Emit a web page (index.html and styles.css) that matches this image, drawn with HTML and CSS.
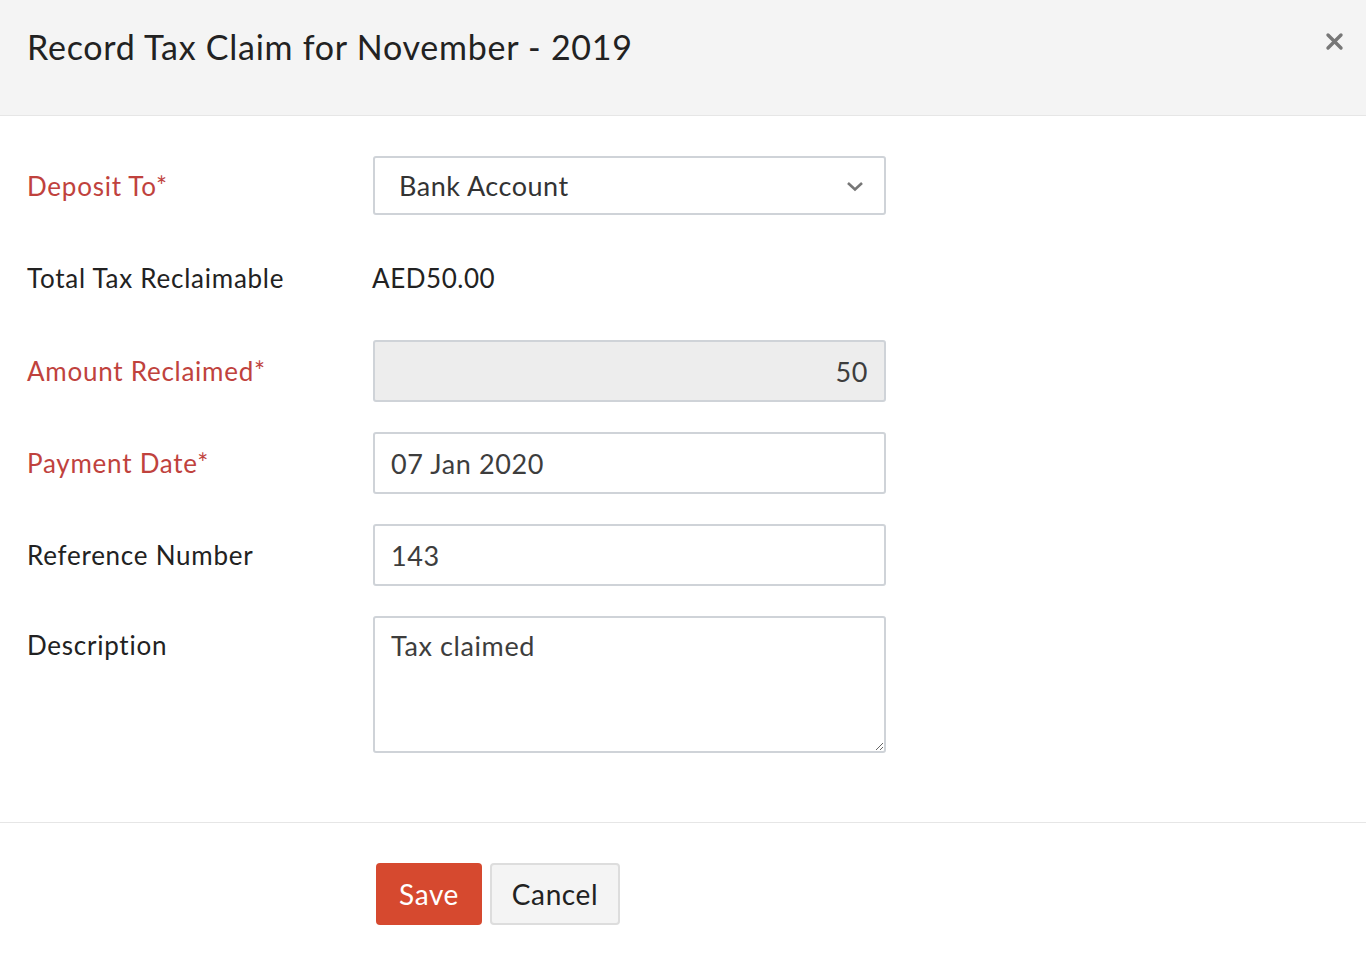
FILE: index.html
```html
<!DOCTYPE html>
<html>
<head>
<meta charset="utf-8">
<title>Record Tax Claim</title>
<link rel="stylesheet" href="styles.css">
</head>
<body>
<div class="modal">
  <div class="modal-header">
    <h1 class="title">Record Tax Claim for November - 2019</h1>
    <button class="close" aria-label="Close">
      <svg width="19" height="19" viewBox="0 0 19 19"><path d="M3 3 L16 16 M16 3 L3 16" stroke="#777" stroke-width="3.4" stroke-linecap="round"/></svg>
    </button>
  </div>
  <div class="modal-body">
    <div class="row">
      <label class="label required">Deposit To*</label>
      <div class="select">
        <span>Bank Account</span>
        <svg class="chev" width="18" height="12" viewBox="0 0 18 12"><path d="M2 3 L9 9.5 L16 3" fill="none" stroke="#777" stroke-width="2.6"/></svg>
      </div>
    </div>
    <div class="row row-static">
      <label class="label">Total Tax Reclaimable</label>
      <div class="static">AED50.00</div>
    </div>
    <div class="row">
      <label class="label required">Amount Reclaimed*</label>
      <input class="input readonly" type="text" value="50" readonly>
    </div>
    <div class="row">
      <label class="label required">Payment Date*</label>
      <input class="input" type="text" value="07 Jan 2020">
    </div>
    <div class="row">
      <label class="label">Reference Number</label>
      <input class="input" type="text" value="143">
    </div>
    <div class="row row-top">
      <label class="label">Description</label>
      <textarea class="input textarea">Tax claimed</textarea>
    </div>
  </div>
  <div class="modal-footer">
    <button class="btn btn-primary">Save</button>
    <button class="btn btn-default">Cancel</button>
  </div>
</div>
</body>
</html>
```
FILE: styles.css
```css
* { box-sizing: border-box; }
html, body { margin: 0; padding: 0; background: #fff; }
body {
  font-family: "Lato", "Liberation Sans", sans-serif;
  color: #222;
}
.modal { width: 1366px; }
.modal-header {
  height: 116px;
  background: #f4f4f4;
  border-bottom: 1px solid #e6e6e6;
  display: flex;
  align-items: flex-start;
  justify-content: space-between;
  padding: 0 22px 0 27px;
}
.title {
  margin: 26px 0 0 0;
  font-size: 34px;
  font-weight: 400;
  color: #222;
  letter-spacing: 0.75px;
}
.close {
  margin-top: 32px;
  background: none;
  border: 0;
  padding: 0;
  width: 20px;
  height: 20px;
  cursor: pointer;
}
.modal-body {
  padding: 40px 0 69px 27px;
  display: flex;
  flex-direction: column;
  gap: 30px;
  border-bottom: 1px solid #e6e6e6;
}
.row {
  display: flex;
  align-items: center;
}
.row-static { height: 65px; }
.row-top { align-items: flex-start; }
.row-top .label { padding-top: 13px; }
.label {
  width: 346px;
  flex: none;
  font-size: 26px;
  color: #222;
  letter-spacing: 0.75px;
}
.label.required { color: #c0423d; }
.select {
  width: 513px;
  height: 59px;
  border: 2px solid #cfd3d8;
  border-radius: 3px;
  display: flex;
  align-items: center;
  justify-content: space-between;
  padding: 0 20px 0 24px;
  font-size: 27px;
  color: #333;
  letter-spacing: 0.5px;
}
.static {
  font-size: 26px;
  color: #222;
  letter-spacing: 0.55px;
  margin-left: -1px;
}
.input {
  width: 513px;
  height: 62px;
  border: 2px solid #cfd3d8;
  border-radius: 3px;
  padding: 0 16px;
  font-family: "Lato", "Liberation Sans", sans-serif;
  font-size: 27px;
  color: #3d3d3d;
  background: #fff;
  letter-spacing: 0.6px;
  outline: none;
}
.input.readonly {
  background: #ededed;
  text-align: right;
}
.textarea {
  height: 137px;
  padding: 12px 16px;
  resize: vertical;
  line-height: 1.2;
}
.modal-footer {
  padding: 40px 0 0 376px;
  display: flex;
  gap: 8px;
}
.btn {
  height: 62px;
  border-radius: 4px;
  font-family: "Lato", "Liberation Sans", sans-serif;
  font-size: 28px;
  letter-spacing: 0.6px;
  cursor: pointer;
}
.btn-primary {
  width: 106px;
  background: #d6492f;
  border: 0;
  color: #fff;
}
.btn-default {
  width: 130px;
  background: #f4f4f4;
  border: 2px solid #ddd;
  color: #222;
}
```
